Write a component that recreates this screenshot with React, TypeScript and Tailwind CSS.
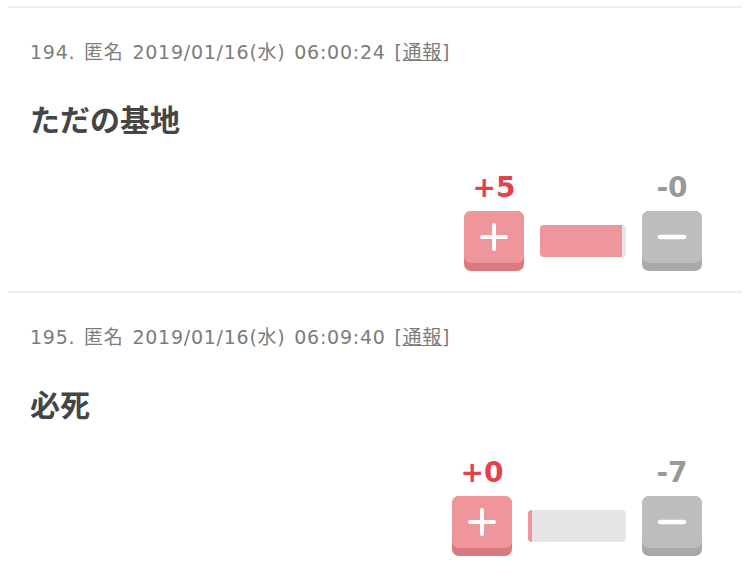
import React from "react";

type Post = {
  no: number;
  time: string;
  body: string;
  plus: number;
  minus: number;
  barW: number;
  fill: number;
};

const posts: Post[] = [
  { no: 194, time: "2019/01/16(水) 06:00:24", body: "ただの基地", plus: 5, minus: 0, barW: 86, fill: 82 },
  { no: 195, time: "2019/01/16(水) 06:09:40", body: "必死", plus: 0, minus: 7, barW: 98, fill: 4 },
];

function PlusIcon() {
  return (
    <svg width="28" height="28" viewBox="0 0 28 28">
      <path d="M14 2v24M2 14h24" stroke="#fff" strokeWidth="4" strokeLinecap="round" />
    </svg>
  );
}

function MinusIcon() {
  return (
    <svg width="30" height="6" viewBox="0 0 30 6">
      <path d="M3 3h24" stroke="#fff" strokeWidth="4.5" strokeLinecap="round" />
    </svg>
  );
}

function PostItem({ p }: { p: Post }) {
  return (
    <div className="border-t-2 border-[#efefef] pl-[22px] pr-[40px] pb-[20px]">
      <div
        className="mt-[32px] h-[24px] whitespace-nowrap text-[19px] leading-[24px] tracking-[0.75px] text-[#7c7c7c] [word-spacing:2px]"
        style={{ fontFamily: '"DejaVu Sans", "Noto Sans CJK JP", sans-serif' }}
      >
        {p.no}. 匿名 {p.time} [<span className="underline">通報</span>]
      </div>
      <div
        className="mt-[34px] h-[40px] text-[30px] font-bold leading-[40px] text-[#454545]"
        style={{ fontFamily: '"Noto Sans CJK JP", sans-serif' }}
      >
        {p.body}
      </div>
      <div
        className="mt-[35px] flex justify-end"
        style={{ fontFamily: '"DejaVu Sans", sans-serif' }}
      >
        <div className="flex items-end gap-[16px]">
          <div className="flex w-[60px] flex-col items-center">
            <div className="h-[30px] whitespace-nowrap text-[28px] font-bold leading-[30px] text-[#e0434c]">+{p.plus}</div>
            <div className="mt-[8px] h-[60px] w-[60px] rounded-[7px] bg-[#d97a82]">
              <div className="flex h-[52px] w-[60px] items-center justify-center rounded-[7px] bg-[#ee969c]">
                <PlusIcon />
              </div>
            </div>
          </div>
          <div className="flex h-[60px] items-center">
            <div
              className="h-[32px] overflow-hidden rounded-[4px] bg-[#e6e6e6]"
              style={{ width: p.barW }}
            >
              <div className="h-full bg-[#ee969c]" style={{ width: p.fill }} />
            </div>
          </div>
          <div className="flex w-[60px] flex-col items-center">
            <div className="h-[30px] whitespace-nowrap text-[28px] font-bold leading-[30px] text-[#999]">-{p.minus}</div>
            <div className="mt-[8px] h-[60px] w-[60px] rounded-[7px] bg-[#a9a9a9]">
              <div className="flex h-[52px] w-[60px] items-center justify-center rounded-[7px] bg-[#bdbdbd]">
                <MinusIcon />
              </div>
            </div>
          </div>
        </div>
      </div>
    </div>
  );
}

export default function App() {
  return (
    <div className="h-[573px] w-[750px] overflow-hidden bg-white">
      <div className="mx-[8px] pt-[6px]">
        {posts.map((p) => (
          <PostItem key={p.no} p={p} />
        ))}
      </div>
    </div>
  );
}
